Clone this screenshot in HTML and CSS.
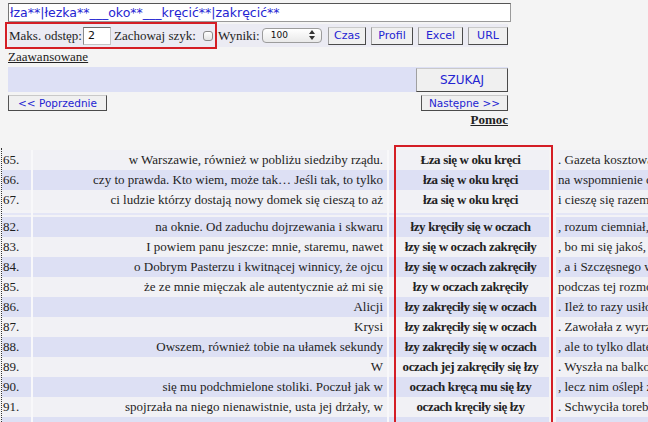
FILE: index.html
```html
<!DOCTYPE html>
<html lang="pl">
<head>
<meta charset="utf-8">
<title>Wyszukiwanie</title>
<link rel="stylesheet" href="styles.css">
</head>
<body>
<div class="form">
  <div class="query">łza**|łezka**___oko**___kręcić**|zakręcić**</div>
  <div class="controls">
    <span class="lbl lbl-maks">Maks. odstęp:</span>
    <span class="numbox">2</span>
    <span class="lbl lbl-szyk">Zachowaj szyk:</span>
    <span class="check"></span>
    <span class="lbl lbl-wyniki">Wyniki:</span>
    <span class="select">100<svg class="arrows" width="6" height="10" viewBox="0 0 6 10"><path d="M3 0L6 4H0Z M3 10L6 6H0Z" fill="#333"/></svg></span>
    <div class="btns">
      <span class="btn b-czas">Czas</span>
      <span class="btn b-profil">Profil</span>
      <span class="btn b-excel">Excel</span>
      <span class="btn b-url">URL</span>
    </div>
  </div>
  <a class="adv">Zaawansowane</a>
  <div class="searchbar"><span class="btn btn-search">SZUKAJ</span></div>
  <div class="nav">
    <span class="btn btn-prev">&lt;&lt; Poprzednie</span>
    <span class="btn btn-next">Następne &gt;&gt;</span>
  </div>
  <div class="help"><a>Pomoc</a></div>
</div>

<div class="results">
  <table>
    <colgroup><col class="c-num"><col class="c-left"><col class="c-mid"><col class="c-right"></colgroup>
    <tr class="o"><td class="num">65.</td><td class="left">w Warszawie, również w pobliżu siedziby rządu.</td><td class="mid">Łza się w oku kręci</td><td class="right">. Gazeta kosztowała</td></tr>
    <tr class="e"><td class="num">66.</td><td class="left">czy to prawda. Kto wiem, może tak… Jeśli tak, to tylko</td><td class="mid">łza się w oku kręci</td><td class="right">na wspomnienie czasów</td></tr>
    <tr class="o"><td class="num">67.</td><td class="left">ci ludzie którzy dostają nowy domek się cieszą to aż</td><td class="mid">łza się w oku kręci</td><td class="right">i cieszę się razem z nimi</td></tr>
    <tr class="sep"><td class="num"></td><td class="left"></td><td class="mid"></td><td class="right"></td></tr>
    <tr class="e"><td class="num">82.</td><td class="left">na oknie. Od zaduchu dojrzewania i skwaru</td><td class="mid">łzy kręciły się w oczach</td><td class="right">, rozum ciemniał,</td></tr>
    <tr class="o"><td class="num">83.</td><td class="left">I powiem panu jeszcze: mnie, staremu, nawet</td><td class="mid">łzy się w oczach zakręciły</td><td class="right">, bo mi się jakoś,</td></tr>
    <tr class="e"><td class="num">84.</td><td class="left">o Dobrym Pasterzu i kwitnącej winnicy, że ojcu</td><td class="mid">łzy się w oczach zakręciły</td><td class="right">, a i Szczęsnego w</td></tr>
    <tr class="o"><td class="num">85.</td><td class="left">że ze mnie mięczak ale autentycznie aż mi się</td><td class="mid">łzy w oczach zakręciły</td><td class="right">podczas tej rozmowy</td></tr>
    <tr class="e"><td class="num">86.</td><td class="left">Alicji</td><td class="mid">łzy zakręciły się w oczach</td><td class="right">. Ileż to razy usiłowała</td></tr>
    <tr class="o"><td class="num">87.</td><td class="left">Krysi</td><td class="mid">łzy zakręciły się w oczach</td><td class="right">. Zawołała z wyrzutem</td></tr>
    <tr class="e"><td class="num">88.</td><td class="left">Owszem, również tobie na ułamek sekundy</td><td class="mid">łzy zakręciły się w oczach</td><td class="right">, ale to tylko dlatego</td></tr>
    <tr class="o"><td class="num">89.</td><td class="left">W</td><td class="mid">oczach jej zakręciły się łzy</td><td class="right">. Wyszła na balkon</td></tr>
    <tr class="e"><td class="num">90.</td><td class="left">się mu podchmielone stoliki. Poczuł jak w</td><td class="mid">oczach kręcą mu się łzy</td><td class="right">, lecz nim oślepł z</td></tr>
    <tr class="o"><td class="num">91.</td><td class="left">spojrzała na niego nienawistnie, usta jej drżały, w</td><td class="mid">oczach kręciły się łzy</td><td class="right">. Schwyciła torebkę</td></tr>
    <tr class="e"><td class="num"></td><td class="left"></td><td class="mid"></td><td class="right"></td></tr>
  </table>
</div>

<div class="mark mark-opts"></div>
<div class="mark mark-col"></div>
</body>
</html>
```
FILE: styles.css
```css
html, body {
  margin: 0;
  padding: 0;
}
body {
  position: relative;
  width: 648px;
  height: 422px;
  overflow: hidden;
  background: #f4f4f4;
  font-family: "Liberation Serif", "Times New Roman", serif;
  font-size: 13px;
  color: #1e1e1e;
}
.form {
  width: 503px;
  padding: 3px 0 0 8px;
}
.query {
  box-sizing: border-box;
  width: 503px;
  height: 19px;
  background: #fff;
  border: 1px solid #9a9a9a;
  border-top-color: #555;
  border-left-color: #777;
  padding-left: 1px;
  font-family: "DejaVu Sans", Verdana, sans-serif;
  font-size: 12.5px;
  line-height: 17px;
  color: #2424d2;
  white-space: nowrap;
  overflow: hidden;
}
.controls {
  display: flex;
  align-items: center;
  width: 500px;
  height: 23px;
  margin-top: 2px;
  background: #ebebf3;
}
.lbl {
  white-space: nowrap;
}
.lbl-maks { margin-left: 1px; }
.numbox {
  box-sizing: border-box;
  width: 28px;
  height: 18px;
  margin-left: 1px;
  background: #fff;
  border: 1px solid #c4c4c4;
  border-top-color: #6a6a6a;
  border-left-color: #8a8a8a;
  padding-left: 4px;
  font-family: "DejaVu Sans", Verdana, sans-serif;
  font-size: 11px;
  line-height: 16px;
  color: #111;
}
.lbl-szyk { margin-left: 3px; }
.check {
  box-sizing: border-box;
  width: 10px;
  height: 10px;
  margin-left: 7px;
  border: 1px solid #8a8a8a;
  border-radius: 3px;
  background: linear-gradient(#ffffff, #e4e4e4);
}
.lbl-wyniki { margin-left: 5px; }
.select {
  box-sizing: border-box;
  position: relative;
  width: 60px;
  height: 15px;
  margin-left: 2px;
  padding-left: 8px;
  border: 1px solid #9c9c9c;
  border-radius: 4px;
  background: linear-gradient(#ffffff, #e9e9e9);
  font-family: "DejaVu Sans", Verdana, sans-serif;
  font-size: 9px;
  line-height: 13px;
  color: #111;
}
.arrows {
  position: absolute;
  right: 6px;
  top: 1px;
}
.btns {
  display: flex;
  gap: 5px;
  margin-left: auto;
}
.btn {
  box-sizing: border-box;
  display: flex;
  align-items: center;
  justify-content: center;
  height: 18px;
  background: #f0f0f0;
  border: 1px solid #4a4a4a;
  border-top-color: #c9c9c9;
  border-left-color: #a0a0a0;
  font-family: "DejaVu Sans", Verdana, sans-serif;
  font-size: 11px;
  color: #2424d2;
  white-space: nowrap;
}
.b-czas { width: 38px; }
.b-profil { width: 42px; }
.b-excel { width: 45px; }
.b-url { width: 40px; }
.adv {
  display: block;
  width: max-content;
  margin-top: 2px;
  line-height: 15px;
  text-decoration: underline;
  color: #222;
}
.searchbar {
  display: flex;
  justify-content: flex-end;
  align-items: flex-end;
  width: 500px;
  height: 25px;
  margin-top: 3px;
  background: #dde0f5;
}
.btn-search {
  width: 92px;
  height: 24px;
  font-size: 12px;
}
.nav {
  display: flex;
  justify-content: space-between;
  width: 500px;
  margin-top: 3px;
}
.btn-prev, .btn-next {
  height: 16px;
  font-size: 10.5px;
  border-left-color: #555;
}
.btn-prev { width: 99px; }
.btn-next { width: 87px; }
.help {
  width: 500px;
  margin-top: 1px;
  text-align: right;
  line-height: 15px;
  font-weight: bold;
}
.help a {
  text-decoration: underline;
  color: #222;
}
.results {
  margin-top: 21px;
  margin-left: 1px;
  padding-top: 2px;
  border-left: 1px dotted #333;
  height: 300px;
}
table {
  border-collapse: separate;
  border-spacing: 0;
  table-layout: fixed;
  width: 900px;
}
.c-num { width: 31px; }
.c-left { width: 356px; }
.c-mid { width: 167px; }
.c-right { width: 346px; }
td {
  box-sizing: border-box;
  height: 20px;
  padding: 0;
  line-height: 20px;
  white-space: nowrap;
  overflow: hidden;
}
tr.o td { background: #f1f1f5; }
tr.e td { background: #dde0f4; }
td.num {
  padding-left: 1px;
  border-right: 2px solid #f8f8fa;
}
td.left {
  text-align: right;
  padding-right: 4px;
  border-right: 2px solid #f8f8fa;
}
td.mid {
  text-align: center;
  font-weight: bold;
  letter-spacing: -0.35px;
  padding-left: 3px;
  border-right: 7px solid #f4f4f4;
  color: #222;
}
td.right {
  padding-left: 2px;
}
tr.sep td {
  height: 7px;
  line-height: 7px;
  background: linear-gradient(#f3f3f6 0 3px, #e4e6f6 3px 5px, #f3f3f6 5px);
}
.mark {
  position: absolute;
  box-sizing: border-box;
  border: 2px solid #d41e25;
}
.mark-opts {
  left: 5px;
  top: 22px;
  width: 212px;
  height: 27px;
}
.mark-col {
  left: 394px;
  top: 145px;
  width: 159px;
  height: 300px;
}
```
